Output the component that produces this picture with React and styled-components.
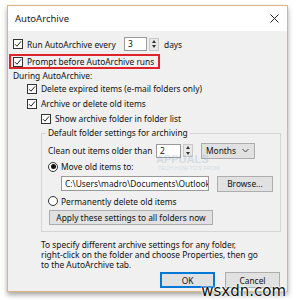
import React from "react";
import styled, { createGlobalStyle } from "styled-components";

const GlobalStyle = createGlobalStyle`
  html, body {
    margin: 0;
    padding: 0;
    background: #ffffff;
  }
  body {
    width: 296px;
    height: 300px;
    overflow: hidden;
    font-family: "Noto Sans", "Open Sans", sans-serif;
    font-size: 8.4px;
    color: #111;
  }
`;

const Page = styled.div`
  position: relative;
  width: 296px;
  height: 300px;
  padding: 5px 0 0 7px;
  box-sizing: border-box;
`;

const Window = styled.div`
  width: 281px;
  height: 287px;
  box-sizing: border-box;
  border: 1px solid #e0b37c;
  box-shadow: 0 3px 5px rgba(0, 0, 0, 0.35);
  display: flex;
  flex-direction: column;
  background: #f0f0f0;
`;

const TitleBar = styled.div`
  height: 25px;
  flex: none;
  background: #ffffff;
  display: flex;
  align-items: center;
  justify-content: space-between;
  padding: 0 8px 0 7px;
  font-size: 9.5px;
  color: #222;
`;

const Body = styled.div`
  flex: 1;
  padding: 6px 5px 0 5px;
  display: flex;
  flex-direction: column;
`;

const Row = styled.div`
  display: flex;
  align-items: center;
  flex: none;
  height: ${(p) => p.h || 15}px;
  padding-left: ${(p) => p.indent || 0}px;
  gap: ${(p) => p.gap || 4}px;
  white-space: nowrap;
`;

const Label = styled.span`
  flex: none;
  width: ${(p) => (p.w ? `${p.w}px` : "auto")};
`;

const Highlight = styled.div`
  margin: 3px 0 0 -4px;
  width: 151px;
  height: 15px;
  flex: none;
  box-sizing: border-box;
  border: 2px solid #e0232a;
  display: flex;
  align-items: center;
  padding-left: 2px;
  gap: 4px;
  white-space: nowrap;
`;

const Box = styled.span`
  width: 10px;
  height: 10px;
  flex: none;
  box-sizing: border-box;
  border: 1px solid #333;
  background: #fff;
  display: inline-flex;
  align-items: center;
  justify-content: center;
`;

const Radio = styled.span`
  width: 10px;
  height: 10px;
  flex: none;
  box-sizing: border-box;
  border: 1px solid #333;
  border-radius: 50%;
  background: #fff;
  display: inline-flex;
  align-items: center;
  justify-content: center;
  &::after {
    content: "";
    width: 5px;
    height: 5px;
    border-radius: 50%;
    background: ${(p) => (p.checked ? "#111" : "transparent")};
  }
`;

const Field = styled.span`
  display: block;
  flex: none;
  width: ${(p) => p.w}px;
  height: ${(p) => p.h || 14}px;
  line-height: ${(p) => (p.h || 14) - 2}px;
  box-sizing: border-box;
  border: 1px solid #9a9a9a;
  background: #fff;
  padding-left: 3px;
  overflow: hidden;
  white-space: nowrap;
`;

const Spin = styled.span`
  width: 10px;
  height: 13px;
  flex: none;
  box-sizing: border-box;
  border: 1px solid #c8c8c8;
  background: #e8e8e8;
  display: inline-flex;
  flex-direction: column;
  align-items: center;
  justify-content: space-around;
  margin-left: -2px;
`;

const Arrow = styled.span`
  width: 0;
  height: 0;
  border-left: 2.5px solid transparent;
  border-right: 2.5px solid transparent;
  ${(p) => (p.down ? "border-top: 3px solid #333;" : "border-bottom: 3px solid #333;")}
`;

const Select = styled.span`
  width: 54px;
  height: 16px;
  flex: none;
  box-sizing: border-box;
  border: 1px solid #adadad;
  background: #e1e1e1;
  display: inline-flex;
  align-items: center;
  justify-content: space-between;
  padding: 0 5px 0 4px;
  margin-left: 4px;
`;

const Group = styled.div`
  position: relative;
  margin: 7px 1px 0 28px;
  border: 1px solid #d5d5d5;
  padding: 8px 0 5px 6px;
  height: 99px;
  flex: none;
  box-sizing: border-box;
  display: flex;
  flex-direction: column;
`;

const Legend = styled.span`
  position: absolute;
  top: -7px;
  left: 4px;
  padding: 0 2px;
  background: #f0f0f0;
  white-space: nowrap;
`;

const Button = styled.span`
  height: ${(p) => p.h || 16}px;
  width: ${(p) => p.w}px;
  box-sizing: border-box;
  border: 1px solid ${(p) => (p.primary ? "#0078d7" : "#adadad")};
  box-shadow: ${(p) => (p.primary ? "inset 0 0 0 1px #0078d7" : "none")};
  background: #e1e1e1;
  display: inline-flex;
  align-items: center;
  justify-content: center;
  white-space: nowrap;
  flex: none;
`;

const Note = styled.div`
  margin: 8px 0 0 28px;
  line-height: 10px;
  flex: none;
`;

const Footer = styled.div`
  display: flex;
  justify-content: flex-end;
  gap: 10px;
  padding-right: 2px;
  margin-top: 2px;
`;

const Watermark = styled.div`
  position: absolute;
  right: 10px;
  bottom: 0px;
  font-family: "DejaVu Sans", sans-serif;
  font-size: 15px;
  color: #111;
  text-shadow: 0 0 2px #fff, 0 0 2px #fff, 0 0 2px #fff;
`;

const Faint = styled.div`
  position: absolute;
  left: 156px;
  top: 155px;
  font-family: "Liberation Sans", sans-serif;
  font-weight: bold;
  font-size: 11px;
  color: #5d8fb0;
  opacity: 0.2;
  line-height: 9px;
  pointer-events: none;
  span {
    display: block;
    font-size: 5.5px;
    font-weight: normal;
    margin-left: 2px;
  }
`;

const Check = () => (
  <svg width="8" height="8" viewBox="0 0 8 8">
    <path d="M1 4.2 L3 6.2 L7 1.4" fill="none" stroke="#222" strokeWidth="1" />
  </svg>
);

const CheckBox = ({ checked = true }) => <Box>{checked && <Check />}</Box>;

const Spinner = ({ value, w }) => (
  <>
    <Field w={w}>{value}</Field>
    <Spin>
      <Arrow />
      <Arrow down />
    </Spin>
  </>
);

export default function App() {
  return (
    <Page>
      <GlobalStyle />
      <Window>
        <TitleBar>
          <span>AutoArchive</span>
          <svg width="9" height="9" viewBox="0 0 9 9">
            <path d="M0.5 0.5 L8.5 8.5 M8.5 0.5 L0.5 8.5" stroke="#222" strokeWidth="1" />
          </svg>
        </TitleBar>
        <Body>
          <Row h={14}>
            <CheckBox />
            <Label w={93}>Run AutoArchive every</Label>
            <Spinner value="3" w={23} />
            <Label style={{ marginLeft: 1 }}>days</Label>
          </Row>
          <Highlight>
            <CheckBox />
            <Label>Prompt before AutoArchive runs</Label>
          </Highlight>
          <Row h={12}>During AutoArchive:</Row>
          <Row indent={14}>
            <CheckBox />
            <Label>Delete expired items (e-mail folders only)</Label>
          </Row>
          <Row indent={14}>
            <CheckBox />
            <Label>Archive or delete old items</Label>
          </Row>
          <Row indent={28}>
            <CheckBox />
            <Label>Show archive folder in folder list</Label>
          </Row>
          <Group>
            <Legend>Default folder settings for archiving</Legend>
            <Row h={17}>
              <Label w={104}>Clean out items older than</Label>
              <Spinner value="2" w={25} />
              <Select>
                <span>Months</span>
                <svg width="7" height="5" viewBox="0 0 7 5">
                  <path d="M0.5 1 L3.5 4 L6.5 1" fill="none" stroke="#444" strokeWidth="1" />
                </svg>
              </Select>
            </Row>
            <Row h={15} gap={3}>
              <Radio checked />
              <Label>Move old items to:</Label>
            </Row>
            <Row h={19} indent={13} gap={8}>
              <Field w={148} h={15}>C:\Users\madro\Documents\Outlook</Field>
              <Button w={56}>Browse...</Button>
            </Row>
            <Row h={16} gap={3}>
              <Radio />
              <Label>Permanently delete old items</Label>
            </Row>
            <Row h={17} indent={1}>
              <Button w={164} h={15}>Apply these settings to all folders now</Button>
            </Row>
          </Group>
          <Note>
            To specify different archive settings for any folder,
            <br />
            right-click on the folder and choose Properties, then go
            <br />
            to the AutoArchive tab.
          </Note>
          <Footer>
            <Button w={55} primary>OK</Button>
            <Button w={55}>Cancel</Button>
          </Footer>
        </Body>
      </Window>
      <Faint>
        APPUALS
        <span>TECH HOW-TO'S FROM</span>
      </Faint>
      <Watermark>wsxdn.com</Watermark>
    </Page>
  );
}
